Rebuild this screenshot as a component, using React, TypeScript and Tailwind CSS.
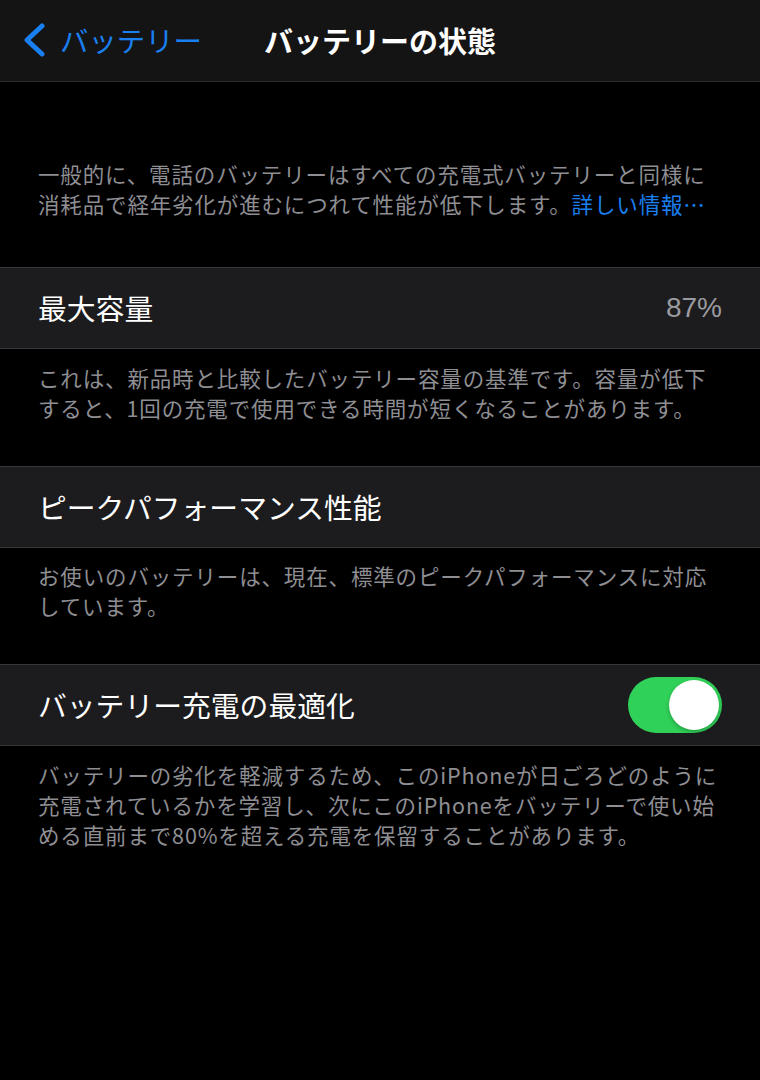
import { useState } from "react";

const jp = { fontFamily: '"Noto Sans CJK JP", "Noto Sans", sans-serif' };

function Footnote({ children }: { children: React.ReactNode }) {
  return (
    <p className="px-[38px] text-[21.5px] leading-[30px] text-[#8e8e93] tracking-[0.85px]">
      {children}
    </p>
  );
}

function Row({ label, children }: { label: string; children?: React.ReactNode }) {
  return (
    <div className="flex h-[82px] items-center justify-between border-y border-[#38383a] bg-[#1c1c1e] pl-[38px] pr-[38px]">
      <span className="text-[28.8px] text-white">{label}</span>
      {children}
    </div>
  );
}

export default function App() {
  const [optimized, setOptimized] = useState(true);

  return (
    <div className="min-h-[1080px] w-[760px] bg-black" style={jp}>
      {/* ナビゲーションバー */}
      <header className="relative flex h-[82px] items-center border-b border-[#2a2a2c] bg-[#141414]">
        <button className="flex items-center gap-[14px] pl-[22px] text-[#1a7ff0]">
          <svg width="24" height="34" viewBox="0 0 24 34" fill="none">
            <path d="M20 3 L5 17 L20 31" stroke="currentColor" strokeWidth="5" strokeLinecap="round" strokeLinejoin="round" />
          </svg>
          <span className="text-[28.4px]">バッテリー</span>
        </button>
        <h1 className="absolute left-1/2 -translate-x-1/2 text-[29px] font-bold text-white">バッテリーの状態</h1>
      </header>

      <div className="pt-[77px] pb-[48px]">
        <Footnote>
          一般的に、電話のバッテリーはすべての充電式バッテリーと同様に
          <br />
          消耗品で経年劣化が進むにつれて性能が低下します。<span className="text-[#1a7ff0]">詳しい情報…</span>
        </Footnote>
      </div>

      <Row label="最大容量">
        <span className="text-[28px] text-[#9a9a9f]" style={{ fontFamily: '"Liberation Sans", Arial, sans-serif' }}>
          87%
        </span>
      </Row>

      <div className="pt-[14px] pb-[43px]">
        <Footnote>
          これは、新品時と比較したバッテリー容量の基準です。容量が低下
          <br />
          すると、1回の充電で使用できる時間が短くなることがあります。
        </Footnote>
      </div>

      <Row label="ピークパフォーマンス性能" />

      <div className="pt-[13px] pb-[43px]">
        <Footnote>
          お使いのバッテリーは、現在、標準のピークパフォーマンスに対応
          <br />
          しています。
        </Footnote>
      </div>

      <Row label="バッテリー充電の最適化">
        <button
          onClick={() => setOptimized(!optimized)}
          className={`flex h-[56px] w-[94px] items-center rounded-full p-[3px] ${optimized ? "justify-end bg-[#30d158]" : "justify-start bg-[#39393d]"}`}
        >
          <span className="h-[50px] w-[50px] rounded-full bg-white shadow-[0_2px_4px_rgba(0,0,0,0.25)]" />
        </button>
      </Row>

      <div className="pt-[14px]">
        <Footnote>
          バッテリーの劣化を軽減するため、このiPhoneが日ごろどのように
          <br />
          充電されているかを学習し、次にこのiPhoneをバッテリーで使い始
          <br />
          める直前まで80%を超える充電を保留することがあります。
        </Footnote>
      </div>
    </div>
  );
}
